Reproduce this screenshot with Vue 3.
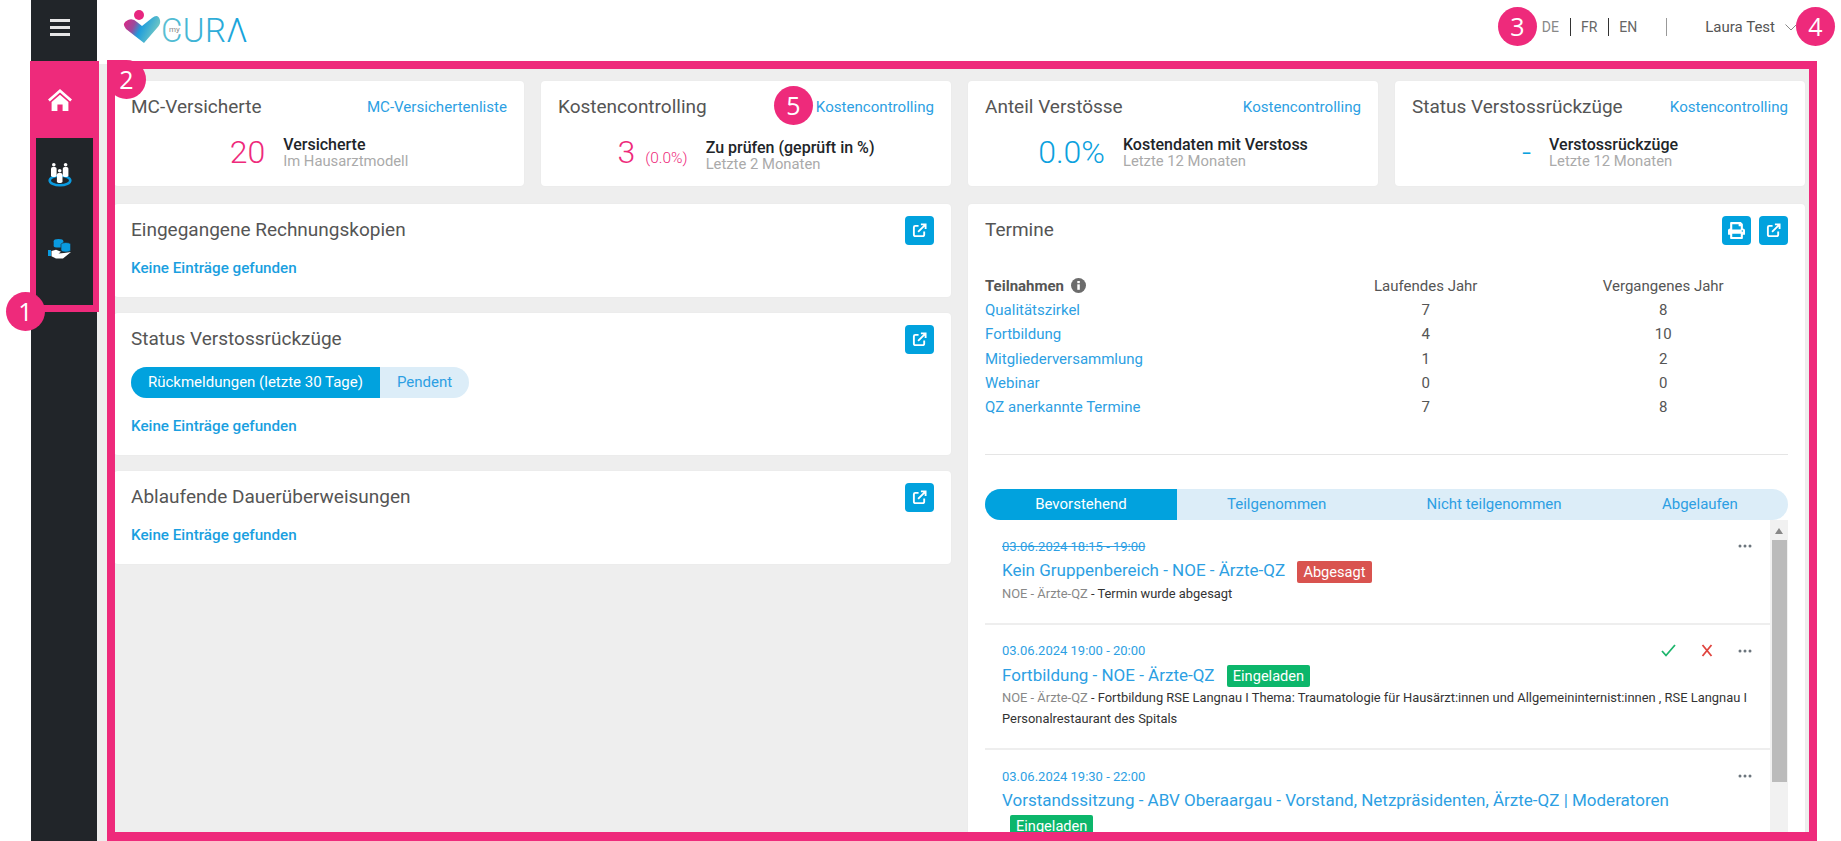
<template>
  <div class="page">
    <aside class="sidebar">
      <div class="toggle">
        <span></span><span></span><span></span>
      </div>
      <div class="nav-item active">
        <svg width="24" height="22" viewBox="0 0 24 22">
          <path fill="#fff" d="M12 0 L0 10.500 l1.800 2 L12 3.600 l10.200 8.900 1.800-2z" />
          <path fill="#fff" d="M3.600 13 L12 5.800 L20.400 13 V22 H14.600 V15.500 H9.400 V22 H3.600z" />
        </svg>
      </div>
      <div class="nav-item">
        <svg width="24" height="24" viewBox="0 0 24 24">
          <ellipse cx="12" cy="17.500" rx="10.300" ry="4.800" fill="none" stroke="#0a9be0" stroke-width="2.600" />
          <g fill="#fff">
            <circle cx="5.800" cy="1.800" r="1.800" /><rect x="3" y="4" width="5.600" height="10" rx="1.800" />
            <circle cx="17.600" cy="1.800" r="1.800" /><rect x="14.800" y="4" width="5.600" height="10" rx="1.800" />
            <circle cx="11.700" cy="7.800" r="1.800" /><rect x="8.900" y="10" width="5.600" height="10" rx="1.800" />
          </g>
        </svg>
      </div>
      <div class="nav-item">
        <svg width="24" height="20" viewBox="0 0 24 20">
          <g fill="#0a9be0">
            <ellipse cx="10.500" cy="2" rx="4.800" ry="2" />
            <rect x="5.700" y="2" width="9.600" height="5" />
            <ellipse cx="10.500" cy="7" rx="4.800" ry="1.600" />
            <rect x="0" y="11" width="3" height="6" />
          </g>
          <g fill="#0a9be0" stroke="#212529" stroke-width=".6">
            <path d="M13 5.500 a4.800 2 0 0 1 9.600 0 v5.500 a4.800 2 0 0 1 -9.600 0z" />
          </g>
          <path fill="#fff" d="M3.500 12 L8 10.800 L13 12.800 L10.500 14.500 L16 14 L23 13 L15 19.500 H8 L3.500 17.200z" />
        </svg>
      </div>
    </aside>

    <div class="main">
      <header class="topbar">
        <svg class="logo" width="134" height="40" viewBox="0 0 134 40">
          <defs>
            <linearGradient id="heartGrad" x1="0" y1="0" x2="1" y2="0.350">
              <stop offset="0" stop-color="#ea2080" />
              <stop offset="0.350" stop-color="#9a4a9c" />
              <stop offset="0.550" stop-color="#1e9ddc" />
              <stop offset="1" stop-color="#72c8c4" />
            </linearGradient>
            <linearGradient id="curaGrad" x1="0" y1="0" x2="1" y2="0">
              <stop offset="0" stop-color="#5cc0d2" />
              <stop offset="1" stop-color="#12a0dc" />
            </linearGradient>
          </defs>
          <circle cx="19" cy="7" r="5" fill="#e7267f" />
          <path fill="url(#heartGrad)" d="M24 35 L6 21 Q1 15 8 12 Q13 10 17 14 L22 18 L32 10 Q38 5 40 12 Q41 16 37 20z" />
          <text x="41" y="34" class="logo-cura" fill="url(#curaGrad)">CURΛ</text>
          <text x="49" y="24" class="logo-my">my</text>
        </svg>
        <div class="lang">
          <span class="lang-item current">DE</span>
          <span class="lang-item">FR</span>
          <span class="lang-item">EN</span>
        </div>
        <div class="user">
          <span>Laura Test</span>
          <svg width="12" height="7" viewBox="0 0 12 7"><path fill="none" stroke="#888" d="M.5.5 6 6l5.500-5.500" /></svg>
        </div>
      </header>

      <main class="content">
        <section class="stats">
          <div v-for="stat in stats" :key="stat.title" class="card stat-card">
            <div class="card-head">
              <h2 class="card-title">{{ stat.title }}</h2>
              <a class="head-link">{{ stat.link }}</a>
            </div>
            <div class="stat-body">
              <div class="stat-value" :class="stat.tone">
                {{ stat.value }}<small v-if="stat.extra">{{ stat.extra }}</small>
              </div>
              <div class="stat-text">
                <strong>{{ stat.label }}</strong>
                <span>{{ stat.sub }}</span>
              </div>
            </div>
          </div>
        </section>

        <section class="columns">
          <div class="col">
            <div class="card panel">
              <div class="panel-head">
                <h2 class="card-title">Eingegangene Rechnungskopien</h2>
                <button class="icon-btn">
                  <svg width="15" height="15" viewBox="0 0 16 16"><path fill="none" stroke="#fff" stroke-width="2" :d="extPath" /></svg>
                </button>
              </div>
              <p class="empty">Keine Einträge gefunden</p>
            </div>

            <div class="card panel">
              <div class="panel-head">
                <h2 class="card-title">Status Verstossrückzüge</h2>
                <button class="icon-btn">
                  <svg width="15" height="15" viewBox="0 0 16 16"><path fill="none" stroke="#fff" stroke-width="2" :d="extPath" /></svg>
                </button>
              </div>
              <div class="tabs small-tabs">
                <span class="tab on">Rückmeldungen (letzte 30 Tage)</span>
                <span class="tab">Pendent</span>
              </div>
              <p class="empty">Keine Einträge gefunden</p>
            </div>

            <div class="card panel">
              <div class="panel-head">
                <h2 class="card-title">Ablaufende Dauerüberweisungen</h2>
                <button class="icon-btn">
                  <svg width="15" height="15" viewBox="0 0 16 16"><path fill="none" stroke="#fff" stroke-width="2" :d="extPath" /></svg>
                </button>
              </div>
              <p class="empty">Keine Einträge gefunden</p>
            </div>
          </div>

          <div class="card termine">
            <div class="panel-head">
              <h2 class="card-title">Termine</h2>
              <div class="btn-group">
                <button class="icon-btn">
                  <svg width="17" height="17" viewBox="0 0 512 512"><path fill="#fff" d="M448 192V77.25c0-8.49-3.37-16.62-9.37-22.63L393.37 9.37c-6-6-14.14-9.37-22.63-9.37H96C78.33 0 64 14.33 64 32v160c-35.35 0-64 28.65-64 64v112c0 8.84 7.16 16 16 16h48v96c0 17.67 14.33 32 32 32h320c17.67 0 32-14.33 32-32v-96h48c8.84 0 16-7.16 16-16V256c0-35.35-28.65-64-64-64zm-64 256H128v-96h256v96zm0-224H128V64h192v48c0 8.84 7.16 16 16 16h48v96zm48 72c-13.25 0-24-10.75-24-24 0-13.26 10.75-24 24-24s24 10.74 24 24c0 13.25-10.75 24-24 24z" /></svg>
                </button>
                <button class="icon-btn">
                  <svg width="15" height="15" viewBox="0 0 16 16"><path fill="none" stroke="#fff" stroke-width="2" :d="extPath" /></svg>
                </button>
              </div>
            </div>

            <table class="teilnahmen">
              <thead>
                <tr>
                  <th>
                    Teilnahmen
                    <svg class="info" width="15" height="15" viewBox="0 0 15 15">
                      <circle cx="7.500" cy="7.500" r="7.500" fill="#6c6c6c" />
                      <rect x="6.300" y="6.300" width="2.500" height="5.500" fill="#fff" />
                      <rect x="6.300" y="3" width="2.500" height="2.200" fill="#fff" />
                    </svg>
                  </th>
                  <th>Laufendes Jahr</th>
                  <th>Vergangenes Jahr</th>
                </tr>
              </thead>
              <tbody>
                <tr v-for="row in teilnahmen" :key="row.name">
                  <td><a>{{ row.name }}</a></td>
                  <td>{{ row.current }}</td>
                  <td>{{ row.past }}</td>
                </tr>
              </tbody>
            </table>

            <hr class="divider" />

            <div class="tabs big-tabs">
              <span v-for="(tab, i) in termineTabs" :key="tab" class="tab" :class="{ on: i === 0 }">{{ tab }}</span>
            </div>

            <div class="list-wrap">
              <ul class="termin-list">
                <li v-for="t in termine" :key="t.title" class="termin">
                  <div class="termin-top">
                    <span class="termin-date" :class="{ cancelled: t.cancelled }">{{ t.date }}</span>
                    <div class="termin-actions">
                      <svg v-if="t.invited" width="15" height="13" viewBox="0 0 15 13"><path fill="none" stroke="#1db56c" stroke-width="1.800" d="M1 7l4 4.500L14 1" /></svg>
                      <svg v-if="t.invited" width="12" height="13" viewBox="0 0 12 13"><path fill="none" stroke="#e0443e" stroke-width="1.800" d="M1.500 1l9 11M10.500 1l-9 11" /></svg>
                      <svg class="dots" width="14" height="4" viewBox="0 0 14 4">
                        <circle cx="2" cy="2" r="1.500" /><circle cx="7" cy="2" r="1.500" /><circle cx="12" cy="2" r="1.500" />
                      </svg>
                    </div>
                  </div>
                  <div class="termin-title">
                    <a>{{ t.title }}</a>{{ ' ' }}<span class="tag" :class="t.tagClass">{{ t.tag }}</span>
                  </div>
                  <p v-if="t.group" class="termin-desc"><span>{{ t.group }}</span> - {{ t.text }}</p>
                </li>
              </ul>
              <div class="scroll">
                <i class="arrow"></i>
                <div class="thumb"></div>
              </div>
            </div>
          </div>
        </section>
      </main>
    </div>

    <!-- annotation overlay from the manual -->
    <div class="frame frame-nav"></div>
    <div class="frame frame-main"></div>
    <span class="badge b1">1</span>
    <span class="badge b2">2</span>
    <span class="badge b3">3</span>
    <span class="badge b4">4</span>
    <span class="badge b5">5</span>
  </div>
</template>

<script setup>
const extPath = 'M7 3H3.500A1.500 1.500 0 0 0 2 4.500v8A1.500 1.500 0 0 0 3.500 14h8a1.500 1.500 0 0 0 1.500-1.500V9M6.500 9.500 14 2M9.500 1.500H14.500V6.500'

const stats = [
  { title: 'MC-Versicherte', link: 'MC-Versichertenliste', value: '20', tone: 'pink', label: 'Versicherte', sub: 'Im Hausarztmodell' },
  { title: 'Kostencontrolling', link: 'Kostencontrolling', value: '3', extra: '(0.0%)', tone: 'pink', label: 'Zu prüfen (geprüft in %)', sub: 'Letzte 2 Monaten' },
  { title: 'Anteil Verstösse', link: 'Kostencontrolling', value: '0.0%', tone: 'blue', label: 'Kostendaten mit Verstoss', sub: 'Letzte 12 Monaten' },
  { title: 'Status Verstossrückzüge', link: 'Kostencontrolling', value: '-', tone: 'blue', label: 'Verstossrückzüge', sub: 'Letzte 12 Monaten' },
]

const teilnahmen = [
  { name: 'Qualitätszirkel', current: 7, past: 8 },
  { name: 'Fortbildung', current: 4, past: 10 },
  { name: 'Mitgliederversammlung', current: 1, past: 2 },
  { name: 'Webinar', current: 0, past: 0 },
  { name: 'QZ anerkannte Termine', current: 7, past: 8 },
]

const termineTabs = ['Bevorstehend', 'Teilgenommen', 'Nicht teilgenommen', 'Abgelaufen']

const termine = [
  {
    date: '03.06.2024 18:15 - 19:00',
    cancelled: true,
    title: 'Kein Gruppenbereich - NOE - Ärzte-QZ',
    tag: 'Abgesagt',
    tagClass: 'red',
    group: 'NOE - Ärzte-QZ',
    text: 'Termin wurde abgesagt',
  },
  {
    date: '03.06.2024 19:00 - 20:00',
    invited: true,
    title: 'Fortbildung - NOE - Ärzte-QZ',
    tag: 'Eingeladen',
    tagClass: 'green',
    group: 'NOE - Ärzte-QZ',
    text: 'Fortbildung RSE Langnau I Thema: Traumatologie für Hausärzt:innen und Allgemeininternist:innen , RSE Langnau I Personalrestaurant des Spitals',
  },
  {
    date: '03.06.2024 19:30 - 22:00',
    title: 'Vorstandssitzung - ABV Oberaargau - Vorstand, Netzpräsidenten, Ärzte-QZ | Moderatoren',
    tag: 'Eingeladen',
    tagClass: 'green',
  },
]
</script>

<style>
html, body {
  margin: 0;
  overflow: hidden;
  background: #fff;
}
</style>

<style scoped>
.page {
  position: relative;
  display: flex;
  height: 841px;
  width: 1841px;
  padding: 0 24px 0 31px;
  box-sizing: border-box;
  overflow: hidden;
  font-family: Roboto, "Liberation Sans", sans-serif;
  font-size: 14px;
  color: #495057;
  background: #fff;
}

/* sidebar */
.sidebar {
  flex: 0 0 66px;
  background: #212529;
}
.toggle {
  height: 61px;
  width: 58px;
  display: flex;
  flex-direction: column;
  justify-content: center;
  align-items: center;
  gap: 4px;
  padding-bottom: 7px;
  box-sizing: border-box;
}
.toggle span {
  width: 20px;
  height: 3px;
  background: #e6e6e6;
}
.nav-item {
  height: 74px;
  padding-right: 8px;
  display: flex;
  align-items: center;
  justify-content: center;
}
.nav-item.active {
  height: 77px;
  background: #ee2a7b;
}

/* top bar */
.main {
  flex: 1;
  min-width: 0;
  display: flex;
  flex-direction: column;
  background: #eee;
}
.topbar {
  flex: 0 0 64px;
  display: flex;
  align-items: flex-start;
  background: #fff;
}
.logo {
  margin: 8px 0 0 23px;
}
.logo-cura {
  font-family: Roboto, sans-serif;
  font-weight: 300;
  font-size: 33px;
  letter-spacing: 0.400px;
}
.logo-my {
  font-family: Roboto, sans-serif;
  font-size: 8px;
  fill: #8a8a8a;
}
.lang {
  margin: 18px 0 0 auto;
  display: flex;
  color: #666;
  font-size: 14px;
  line-height: 18px;
}
.lang-item {
  padding: 0 11px 0 10px;
  border-left: 1px solid #333;
}
.lang-item:first-child {
  border-left: none;
}
.lang-item.current {
  color: #888;
}
.user {
  margin: 18px 20px 0 18px;
  padding-left: 38px;
  display: flex;
  align-items: center;
  gap: 10px;
  height: 18px;
  font-size: 15px;
  color: #555;
  border-left: 1px solid #999;
}

/* content */
.content {
  flex: 1;
  min-height: 0;
  padding: 17px 12px 0 17px;
  display: flex;
  flex-direction: column;
  gap: 18px;
}
.stats {
  display: grid;
  grid-template-columns: repeat(4, 1fr);
  gap: 17px;
}
.columns {
  flex: 1;
  min-height: 0;
  display: grid;
  grid-template-columns: 1fr 1fr;
  gap: 17px;
}
.col {
  display: flex;
  flex-direction: column;
  gap: 16px;
}
.card {
  background: #fff;
  border-radius: 4px;
  box-shadow: 0 0 2px rgba(0, 0, 0, 0.04);
}
.card-title {
  margin: 0;
  font-size: 19px;
  font-weight: 400;
  line-height: 26px;
  color: #555;
}
.stat-card {
  height: 105px;
  padding: 13px 17px 0;
  box-sizing: border-box;
}
.card-head {
  display: flex;
  justify-content: space-between;
  align-items: center;
}
.head-link,
.termin-title a,
.teilnahmen a {
  color: #2d9fe3;
}
.head-link {
  font-size: 15.100px;
}
.stat-body {
  margin-top: 12px;
  display: flex;
  justify-content: center;
  align-items: center;
  gap: 18px;
}
.stat-value {
  font-size: 32px;
  font-weight: 300;
  line-height: 40px;
}
.stat-value small {
  margin-left: 10px;
  font-size: 15.500px;
}
.stat-value.pink {
  color: #ee2a7b;
}
.stat-value.blue {
  color: #0ba1de;
}
.stat-text {
  display: flex;
  flex-direction: column;
  padding-top: 2px;
  line-height: 17px;
  font-size: 14.800px;
}
.stat-text strong {
  font-size: 16px;
  font-weight: 500;
  color: #212529;
}
.stat-text span {
  color: #aaa;
}

.panel {
  padding: 12px 17px 0;
}
.panel-head {
  display: flex;
  justify-content: space-between;
  align-items: flex-start;
  min-height: 29px;
}
.panel-head .card-title {
  margin-top: 1px;
}
.btn-group {
  display: flex;
  gap: 8px;
}
.icon-btn {
  width: 29px;
  height: 29px;
  padding: 0;
  border: none;
  border-radius: 4px;
  background: #01a2de;
  display: flex;
  align-items: center;
  justify-content: center;
}
.empty {
  margin: 13px 0 19px;
  font-size: 15.200px;
  font-weight: 500;
  line-height: 20px;
  color: #1a9fe0;
}

/* pill tabs */
.tabs {
  display: flex;
  background: #dcedf8;
  overflow: hidden;
  height: 31px;
  border-radius: 16px;
  line-height: 31px;
  font-size: 15px;
  color: #2d9fe3;
}
.tab {
  white-space: nowrap;
  text-align: center;
}
.tab.on {
  background: #01a2de;
  color: #fff;
}
.small-tabs {
  margin-top: 13px;
  width: 338px;
}
.small-tabs .tab {
  padding: 0 17px;
}
.small-tabs + .empty {
  margin-top: 18px;
}
.big-tabs .tab {
  flex: 1 1 auto;
  padding: 0 50px;
}

/* termine */
.termine {
  padding: 12px 17px 0;
  min-height: 0;
  display: flex;
  flex-direction: column;
  overflow: hidden;
}
.teilnahmen {
  margin-top: 29px;
  width: calc(100% - 6px);
  border-collapse: collapse;
  font-size: 15px;
  table-layout: fixed;
}
.teilnahmen th,
.teilnahmen td {
  height: 24.200px;
  padding: 0;
  font-weight: 400;
  text-align: center;
  color: #555;
}
.teilnahmen th:first-child,
.teilnahmen td:first-child {
  text-align: left;
  width: 322px;
}
.teilnahmen th:first-child {
  font-weight: 700;
}
.info {
  vertical-align: -2px;
  margin-left: 3px;
}
.divider {
  width: 100%;
  margin: 35px 0 34px;
  border: none;
  border-top: 1px solid #e5e5e5;
}
.list-wrap {
  flex: 1;
  min-height: 0;
  display: flex;
}
.termin-list {
  flex: 1;
  min-width: 0;
  margin: 0;
  padding: 0;
  list-style: none;
}
.termin {
  padding: 17px 18px 19px 17px;
  border-bottom: 2px solid #eee;
}
.termin-top {
  display: flex;
  justify-content: space-between;
  align-items: center;
  height: 18px;
}
.termin-date {
  font-size: 13px;
  color: #2d9fe3;
}
.termin-date.cancelled {
  text-decoration: line-through;
}
.termin-actions {
  display: flex;
  align-items: center;
  gap: 25px;
}
.dots {
  fill: #6c757d;
}
.termin-title {
  margin-top: 3px;
  font-size: 17px;
  line-height: 24px;
}
.tag {
  display: inline-block;
  margin-left: 8px;
  padding: 0 6px;
  height: 22px;
  line-height: 22px;
  border-radius: 2px;
  font-size: 14.600px;
  color: #fff;
  vertical-align: middle;
}
.tag.red {
  background: #d9534f;
}
.tag.green {
  background: #0cb66b;
}
.termin-desc {
  margin: 0;
  font-size: 12.900px;
  line-height: 21px;
  color: #333;
}
.termin-desc span {
  color: #888;
}
.scroll {
  flex: 0 0 18px;
  background: #f1f1f1;
  display: flex;
  flex-direction: column;
  align-items: center;
  padding-top: 8px;
  box-sizing: border-box;
}
.arrow {
  width: 0;
  height: 0;
  border-left: 4px solid transparent;
  border-right: 4px solid transparent;
  border-bottom: 6px solid #888;
}
.thumb {
  margin-top: 6px;
  width: 15px;
  height: 242px;
  background: #bbb;
}

/* annotations */
.frame {
  position: absolute;
  box-sizing: border-box;
  border: solid #ee2a7b;
  pointer-events: none;
}
.frame-nav {
  left: 30px;
  top: 61px;
  width: 69px;
  height: 251px;
  border-width: 6px 6px 7px;
}
.frame-main {
  left: 107px;
  top: 61px;
  width: 1710px;
  height: 780px;
  border-width: 8px 8px 9px;
}
.badge {
  position: absolute;
  width: 39px;
  height: 39px;
  border-radius: 50%;
  background: #ee2a7b;
  color: #fff;
  font-family: "Open Sans", sans-serif;
  font-size: 25px;
  line-height: 39px;
  text-align: center;
}
.b1 { left: 6px; top: 292px; }
.b2 { left: 107px; top: 60px; border-top-left-radius: 0; }
.b3 { left: 1498px; top: 7px; }
.b4 { left: 1796px; top: 7px; }
.b5 { left: 774px; top: 86px; }
</style>
